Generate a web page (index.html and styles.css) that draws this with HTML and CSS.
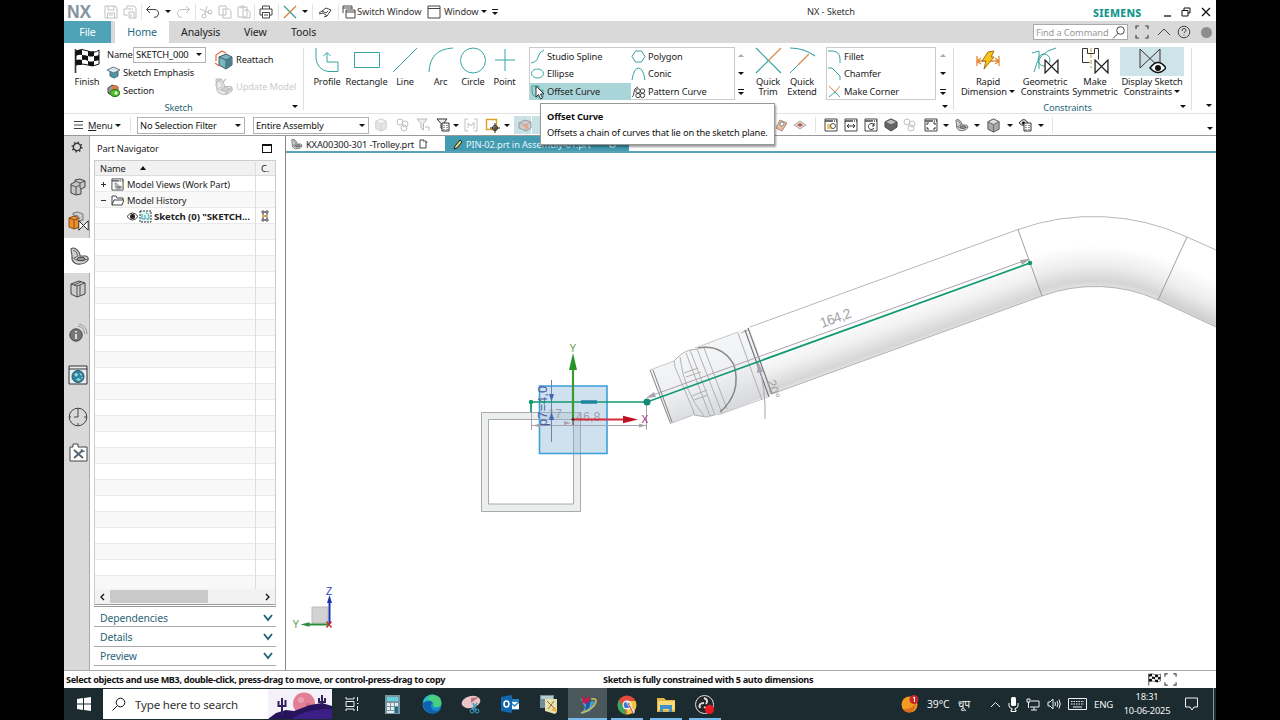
FILE: index.html
```html
<!DOCTYPE html>
<html lang="en">
<head>
    <meta charset="utf-8">
    <title>NX - Sketch</title>
    <link rel="stylesheet" href="styles.css">
</head>
<body>
<svg class="defs" width="0" height="0">
    <symbol id="flag" viewBox="0 0 26 26">
        <path d="M1.500 1v24" stroke="#333" stroke-width="1.600"/>
        <path d="M2 3q6-3 12 0t11-1v14q-5 3-11 1t-12 0z" fill="#fff" stroke="#111"/>
        <path d="M2 3q3-2 6-1v5q-3-1-6 1zM14 3q3 1 6 0v5q-3 1-6 0zM8 7q3 0 6 1v5q-3-2-6-1zM20 8q3 0 5-1v5q-2 1-5 1zM2 12q3-1 6 0v5q-3-1-6 0zM14 13q3 1 6 0v5q-3 1-6-1z" fill="#111"/>
    </symbol>
    <symbol id="bow" viewBox="0 0 14 14"><path d="M1 1v12L13 1v12z" fill="#fff" stroke="#222" stroke-width="1.200"/></symbol>
    <symbol id="shell" viewBox="0 0 20 20">
        <path d="M2 3q2-2 5 0 4 3 4 7l6 0q3 1 2 4-4 5-11 4-6-2-5-8z" fill="#d0d0d0" stroke="#555" stroke-width="1.100"/>
        <path d="M4 4q4 1 5 6L5 12M3 11q5 6 16 2" fill="none" stroke="#666"/>
        <ellipse cx="12" cy="13" rx="4" ry="1.800" fill="#999" stroke="#444"/>
    </symbol>
    <symbol id="cube" viewBox="0 0 16 16">
        <path d="M8 1l6 3v8l-6 3-6-3V4z" fill="#aaa" stroke="#555"/>
        <path d="M8 1l6 3-6 3-6-3z" fill="#ddd" stroke="#666"/><path d="M8 7v8" stroke="#666"/>
    </symbol>
    <symbol id="win" viewBox="0 0 14 14"><path d="M1 1h12v12H1z" fill="#fff" stroke="#444"/><path d="M1 3h12" stroke="#444" stroke-width="1.300" stroke-dasharray="8 1 1 1"/></symbol>
    <symbol id="corners" viewBox="0 0 14 14"><path d="M1 4V1h3M10 1h3v3M13 10v3h-3M4 13H1v-3" fill="none" stroke="#444" stroke-width="1.200"/></symbol>
    <symbol id="chev" viewBox="0 0 10 8"><path d="M1 1l4 5 4-5" fill="none" stroke="#1d6078" stroke-width="1.800"/></symbol>
    <symbol id="funnel" viewBox="0 0 14 14"><path d="M1 1h10L7.500 5.500V12L5 10V5.500z" fill="#eee" stroke="currentColor"/></symbol>
    <symbol id="parts" viewBox="0 0 14 14"><circle cx="4" cy="4" r="3"/><circle cx="9" cy="6" r="3"/><circle cx="8" cy="10" r="3"/></symbol>
</svg>

<div class="app">
    <div class="titlebar">
        <span class="logo">NX</span>
        <svg width="14" height="14" class="off"><path d="M1 1h10l2 2v10H1zM4 1v4h6V1M3.500 13V8h7v5M5 10h4"/></svg>
        <svg width="14" height="14" class="off"><path d="M1 4h3V1h7l2 2v10H6M1 4v6h4M6 13V7h5v6M5 4h5M8 9v3"/></svg>
        <i class="sep"></i>
        <svg width="16" height="14" class="ln dark"><path d="M5 1L1.500 4.500 5 8M2 4.500h8q4 1 3.500 4.500T9 12.500"/></svg>
        <i class="caret"></i>
        <svg width="16" height="14" class="off"><path d="M11 1l3.500 3.500L11 8M14 4.500H6Q2 5.500 2.500 9T7 12.500"/></svg>
        <i class="sep"></i>
        <svg width="14" height="14" class="off"><path d="M8 1L6 9M1 4l11 5"/><circle cx="5" cy="11" r="2"/><circle cx="11" cy="7" r="2"/></svg>
        <svg width="14" height="14" class="off"><path d="M1 1h7v9H1zM5 4h6l2 2v7H5z"/></svg>
        <svg width="14" height="14" class="off"><path d="M1 2h9v10H1zM4 1h3v2H4zM6 5h5l2 2v6H6z"/></svg>
        <i class="sep"></i>
        <svg width="14" height="14" class="ln dark"><path d="M3.500 4V1h7v3M3.500 10H1V4h12v6h-2.500M3.500 7.500h7V13h-7zM5 10h4"/></svg>
        <i class="sep"></i>
        <svg width="14" height="14"><path d="M1 1l12 12" stroke="#3a9d9b" stroke-width="1.300"/><path d="M13 1L1 13" stroke="#d08136" stroke-width="1.300"/></svg>
        <i class="caret"></i>
        <i class="sep"></i>
        <svg width="14" height="12" class="ln dark"><path d="M1 8l4-1 4 3 4-6-5-2-4 3 4 2 2-2M1 7l3-2M9 10l-3 1"/></svg>
        <i class="sep"></i>
        <svg width="14" height="14" class="ln dark"><path d="M1 8V1h9v3M1 3h9M4 5h9v8H4zM4 7h9"/></svg>
        <span class="left">Switch Window</span>
        <svg width="14" height="14" class="ln dark"><path d="M1 1h12v12H1zM1 3.500h12"/></svg>
        <span class="left window-label">Window</span>
        <i class="caret"></i>
        <i class="caret bar"></i>
        <span></span>
        <span class="left doc-title">NX - Sketch</span>
        <span class="left brand">SIEMENS</span>
        <svg width="9" height="12" class="ln black"><path d="M1 10h7"/></svg>
        <svg width="10" height="10" class="ln black thin"><path d="M3 3V1h6v5H7M1 3.500h6V9H1z"/></svg>
        <svg width="10" height="10" class="ln black"><path d="M1 1l8 8M9 1L1 9"/></svg>
    </div>

    <div class="tabs">
        <span class="tab file">File</span>
        <span class="tab home">Home</span>
        <span class="tab analysis">Analysis</span>
        <span class="tab view">View</span>
        <span class="tab tools">Tools</span>
        <div class="find"><span>Find a Command</span><svg width="14" height="13" class="ln dark"><circle cx="8.500" cy="4.500" r="3.800"/><path d="M6 7.500L1 12.500"/></svg></div>
        <div class="tab-icons">
            <svg width="14" height="14"><use href="#corners"/></svg>
            <svg width="14" height="10" class="ln dark"><path d="M1 8l6-6 6 6"/></svg>
            <svg width="14" height="14" class="ln dark"><circle cx="7" cy="7" r="5.800"/><path d="M5 6q0-2.500 2-2.500T9 5.500L7 8M7 9.500v1"/></svg>
            <i class="dot"></i>
        </div>
    </div>

    <div class="ribbon">
        <div class="group sketch">
            <div class="big finish"><svg width="26" height="26"><use href="#flag"/></svg><span>Finish</span></div>
            <div class="stack">
                <div class="row"><span class="name">Name</span><span class="combo small">SKETCH_000<i class="caret"></i></span></div>
                <div class="row"><svg width="13" height="13"><path d="M3 5l4 2 4-2v5l-4 2-4-2z" fill="#4d97a8" stroke="#467"/><path d="M0 4l6.500-3L13 4 6.500 7z" fill="#d9e8ee" stroke="#678"/></svg><span>Sketch Emphasis</span></div>
                <div class="row"><svg width="13" height="13"><path d="M1 4l4-3 6 2v6l-5 3-5-3z" fill="#999" stroke="#444"/><path d="M5 2l5-1 1 5-6 1z" fill="#e47a4a"/><ellipse cx="8" cy="9" rx="5" ry="3.500" fill="#4fc52b" stroke="#276b18"/><circle cx="9" cy="9" r="1.500" fill="#fff"/></svg><span>Section</span></div>
            </div>
            <div class="stack second">
                <div class="row"><svg width="19" height="20"><path d="M5 7l7-3 6 3v8l-6 4-7-4z" fill="#79b6bf" stroke="#456"/><path d="M5 7l7 3 6-3M12 10v9" fill="none" stroke="#456"/><path d="M12 10l6-3v8l-6 4z" fill="#4b7f8b"/><path d="M2 11V5l6-4 4 2M5 16l-4-3" fill="none" stroke="#e2714d" stroke-width="1.300"/></svg><span>Reattach</span></div>
                <div class="row disabled"><svg width="19" height="19" opacity=".4"><use href="#shell"/><path d="M2 9q0-6 6-7M9 5l3-3M11 17l7-7" fill="none" stroke="#666" stroke-width="1.500"/></svg><span>Update Model</span></div>
            </div>
            <div class="group-label">Sketch<i class="caret"></i></div>
        </div>

        <div class="group curve">
            <div class="big"><svg width="26" height="26" class="ln teal"><path d="M2 1v11Q4 23 14 24.500h10V15H13V6M9.500 9L13 5.500 16.500 9"/></svg><span>Profile</span></div>
            <div class="big"><svg width="28" height="26" class="ln teal"><path d="M1.500 5.500h25v15h-25z"/></svg><span>Rectangle</span></div>
            <div class="big"><svg width="26" height="26" class="ln teal"><path d="M1 25L25 1"/></svg><span>Line</span></div>
            <div class="big"><svg width="26" height="26" class="ln teal"><path d="M1 25Q2 2 25 1"/></svg><span>Arc</span></div>
            <div class="big"><svg width="28" height="28" class="ln teal"><circle cx="14" cy="13.500" r="12.500"/></svg><span>Circle</span></div>
            <div class="big"><svg width="22" height="26" class="ln teal"><path d="M11 2v22M1 13h20"/></svg><span>Point</span></div>
            <div class="gallery wide">
                <div><svg width="15" height="15" class="ln teal"><path d="M1 14q6-1 7-6t6-7"/></svg>Studio Spline</div>
                <div><svg width="15" height="15" class="ln teal"><path d="M4.500 2h6L14 7.500 10.500 13h-6L1 7.500z"/></svg>Polygon</div>
                <div><svg width="15" height="15" class="ln teal"><ellipse cx="7.500" cy="7.500" rx="6" ry="4.500"/></svg>Ellipse</div>
                <div><svg width="15" height="15" class="ln teal"><path d="M1 14Q3 2 7.500 2T14 14"/></svg>Conic</div>
                <div class="on"><svg width="15" height="15" class="ln teal"><path d="M2 2h7v4h4v7H6q-4-1-4-6z"/><path d="M5 5h2v4h4" stroke="#d08136"/></svg>Offset Curve</div>
                <div><svg width="15" height="15" class="ln dark"><path d="M1 13q2-1 2-5t4-5"/><circle cx="7" cy="7" r="2.200"/><circle cx="11.500" cy="7" r="2.200"/><circle cx="7" cy="11.500" r="2.200"/><circle cx="11.500" cy="11.500" r="2.200"/></svg>Pattern Curve</div>
            </div>
            <div class="scroll"><i class="caret up"></i><i class="caret"></i><i class="caret bar"></i></div>
            <div class="big two"><svg width="27" height="27"><path d="M1 1l25 25M1 26l13-13" stroke="#36a5a0" stroke-width="1.200"/><path d="M13 14L26 1" stroke="#d98a52" stroke-width="1.300"/></svg><span>Quick</span><span>Trim</span></div>
            <div class="big two"><svg width="27" height="27"><path d="M1 1q14 0 25 8" stroke="#36a5a0" stroke-width="1.200" fill="none"/><path d="M20 7L9 18" stroke="#d98a52" stroke-width="1.300"/><path d="M9 18l-8 8" stroke="#36a5a0"/></svg><span>Quick</span><span>Extend</span></div>
            <div class="gallery narrow">
                <div><svg width="15" height="15" class="ln teal"><path d="M1 2h5q7 1 7 8v4"/></svg>Fillet</div>
                <div><svg width="15" height="15" class="ln teal"><path d="M1 2h4l8 8v4"/></svg>Chamfer</div>
                <div><svg width="15" height="15"><path d="M2 2l11 11" stroke="#d98a52"/><path d="M8 8l5-6" stroke="#d98a52"/><path d="M2 13l6-5 5 5" fill="none" stroke="#36a5a0"/></svg>Make Corner</div>
            </div>
            <div class="scroll last"><i class="caret up"></i><i class="caret"></i><i class="caret bar"></i></div>
            <div class="group-label"><i class="caret"></i></div>
        </div>

        <div class="group constraints">
            <div class="big two"><svg width="26" height="27"><path d="M2 9v10M24 9v10M2 14h22M6 11l-4 3 4 3M20 11l4 3-4 3" fill="none" stroke="#e28a3b" stroke-width="1.300"/><path d="M13 5l6-1-3 6 3 0-10 12 2-8H7z" fill="#f8c51d" stroke="#a86f10"/></svg><span>Rapid</span><span>Dimension <i class="caret"></i></span></div>
            <div class="big two"><svg width="28" height="27"><path d="M3 25Q7 5 25 1M1 6l7-2v18" fill="none" stroke="#36a5a0"/><circle cx="13" cy="13" r="6" fill="none" stroke="#36a5a0"/><use href="#bow" x="13" y="12" width="15" height="15"/></svg><span>Geometric</span><span>Constraints</span></div>
            <div class="big two"><svg width="28" height="27"><path d="M1.500 1.500h5v5h7v-5h4v11M1.500 1.500v14h7" fill="none" stroke="#333"/><path d="M10 1v20" stroke="#d49231" stroke-dasharray="4 2"/><use href="#bow" x="13" y="12" width="15" height="15"/></svg><span>Make</span><span>Symmetric</span></div>
            <div class="big two active"><svg width="28" height="29"><path d="M2 2v19L22 2v19z" fill="#ccdce2" stroke="#333"/><path d="M12 21q8-11 16 0-8 9-16 0z" fill="#fff" stroke="#111" stroke-width="1.400"/><circle cx="20" cy="21" r="3" fill="#111"/></svg><span>Display Sketch</span><span>Constraints <i class="caret"></i></span></div>
            <div class="group-label">Constraints<i class="caret"></i></div>
        </div>
        <div class="ribbon-end"><i class="caret"></i></div>
    </div>

    <div class="selbar">
        <svg width="9" height="10" class="ln dark"><path d="M0 1.500h9M0 5h9M0 8.500h9"/></svg>
        <span class="left"><u>M</u>enu</span>
        <i class="caret"></i>
        <i class="sep"></i>
        <span class="combo">No Selection Filter<i class="caret"></i></span>
        <span></span>
        <span class="combo">Entire Assembly<i class="caret"></i></span>
        <svg width="14" height="14" opacity=".3"><use href="#cube"/></svg>
        <svg width="14" height="14" class="off"><use href="#parts"/></svg>
        <svg width="14" height="14" class="pale"><use href="#funnel"/><path d="M9 9h4v4" fill="none" stroke="#bbb"/></svg>
        <svg width="14" height="14" class="strong"><use href="#funnel"/><path d="M6 5h7v8H6z" fill="#fff" stroke="#333"/><path d="M8 7v5M11 7v5" stroke="#333" stroke-dasharray="1 1"/></svg>
        <i class="caret"></i>
        <svg width="14" height="14" class="off"><path d="M4 1H1v12h3M10 1h3v12h-3M4 10V5l3 3 3-4v7"/></svg>
        <svg width="15" height="15"><path d="M1.500 1.500h10v10h-10z" fill="#fff" stroke="#dc9e25" stroke-width="1.400"/><path d="M10 5v10M5 10h10" stroke="#222"/><circle cx="10" cy="10" r="2.500" fill="none" stroke="#222"/></svg>
        <i class="caret"></i>
        <span class="lit"><svg width="14" height="14"><path d="M1 5l6-3 6 2v6l-5 3-7-3z" fill="#ccc" stroke="#999"/><path d="M1 5l7 2 5-3M8 7v6" fill="none" stroke="#aaa"/><path d="M4 7h6v4z" fill="#f0a37c"/></svg></span>
        <span class="lit"></span>
        <span></span>
        <svg width="13" height="13"><path d="M1 9l4-8 7 3-5 8z" fill="#e7bba2" stroke="#aa8a7a"/><circle cx="7" cy="5" r="2" fill="#fff" stroke="#888"/></svg>
        <svg width="14" height="12"><path d="M1 6l6-4 6 4-6 4z" fill="#ddd" stroke="#aaa"/><path d="M4 6l3-2 3 2-3 2z" fill="#c35b46"/></svg>
        <i class="sep"></i>
        <svg width="14" height="14"><use href="#win"/><path d="M3 6h6v5H3z" fill="#ecc86a"/><circle cx="9" cy="8" r="2.500" fill="#fff" stroke="#555"/></svg>
        <svg width="14" height="14"><use href="#win"/><path d="M3 8h8M5 6L3 8l2 2M9 6l2 2-2 2" fill="none" stroke="#333"/></svg>
        <svg width="14" height="14"><use href="#win"/><path d="M10 7a3 3 0 1 0 0 3M10 5v3H8" fill="none" stroke="#333"/></svg>
        <svg width="14" height="14"><path d="M7 1l6 3v5l-6 4-6-4V4z" fill="#666" stroke="#444"/><path d="M7 1l6 3-6 3-6-3z" fill="#bbb" stroke="#555"/></svg>
        <svg width="14" height="14" class="off"><use href="#parts"/></svg>
        <svg width="14" height="14"><use href="#win"/><path d="M3 7V5h2M9 5h2v2M11 9v2H9M5 11H3V9" fill="none" stroke="#333"/></svg>
        <i class="caret"></i>
        <svg width="15" height="14"><use href="#shell"/></svg>
        <i class="caret"></i>
        <svg width="15" height="15"><use href="#cube"/></svg>
        <i class="caret"></i>
        <svg width="14" height="14"><path d="M1 5q5-7 9 0-4 5-9 0z" fill="#ddd" stroke="#333"/><circle cx="5.500" cy="5" r="1.500"/><path d="M6 5h7v8H6z" fill="#fff" stroke="#333"/><path d="M8 7v5M11 7v5" stroke="#333" stroke-dasharray="1 1"/></svg>
        <i class="caret"></i>
        <i class="sep"></i>
        <span></span>
        <i class="caret low"></i>
    </div>

    <div class="main">
        <div class="resource">
            <span class="r-gear"><svg width="12" height="12"><circle cx="6" cy="6" r="3.600" fill="none" stroke="#333" stroke-width="1.300"/><circle cx="6" cy="6" r="4.800" fill="none" stroke="#333" stroke-width="1.500" stroke-dasharray="1.500 2.270"/></svg></span>
            <span class="r-asm"><svg width="16" height="18"><path d="M1 6l4-2V2l5-1 5 2v6l-4 2v5l-5 1-5-2z" fill="#c6c6c6" stroke="#444"/><path d="M5 3l5 2 5-2M10 5v5l1 1M1 7l5 2 4-2M6 9v8" fill="none" stroke="#555"/></svg></span>
            <span class="r-con"><svg width="21" height="21"><path d="M1 7l5-2 6 2v9l-6 2-5-2z" fill="#ef8e2a" stroke="#864d1b"/><path d="M5 2l5-1 5 2v6l-5 1V5L5 4z" fill="#ccc" stroke="#777"/><path d="M1 7l5 2 6-2M6 9v9" fill="none" stroke="#864d1b"/><use href="#bow" x="10" y="9" width="11" height="11"/></svg></span>
            <span class="r-part"><svg width="20" height="20"><use href="#shell"/></svg></span>
            <span class="r-book"><svg width="16" height="18"><path d="M1 4l8-3 6 2v11l-8 3-6-3z" fill="#ccc" stroke="#444"/><path d="M1 4l6 2v11M7 6l8-3M4 5l7-3M10 5v11" fill="none" stroke="#555"/></svg></span>
            <span class="r-info"><svg width="19" height="19"><circle cx="7" cy="12" r="6.200" fill="#777" stroke="#444"/><path d="M7 8v1.500M7 11v5" stroke="#fff" stroke-width="1.500"/><path d="M9 3q6 1 7 8M10 1q8 2 8 10" fill="none" stroke="#999"/></svg></span>
            <span class="r-web"><svg width="20" height="20"><path d="M1 1h18v18H1z" fill="#e7eef2" stroke="#333"/><path d="M1 4h18" stroke="#333"/><circle cx="10" cy="11.500" r="6" fill="#2888a3" stroke="#34505c"/><path d="M6 9l3-1 1 2-2 2zM11 8l3 1-1 2zM8 14l3-1 2 2-3 1zM13 12l2 0-1 2z" fill="#a4d5db"/></svg></span>
            <span class="r-clock"><svg width="20" height="20" class="ln dark"><circle cx="10" cy="10" r="8.800"/><path d="M10 1v9H6M19 10h-3M1 10h2M10 19v-3"/></svg></span>
            <span class="r-tools"><svg width="19" height="19"><path d="M1 4h3V1h5v3h9v14H1z" fill="#fff" stroke="#444"/><path d="M5 7l9 8M14 7l-9 8" stroke="#567" stroke-width="2"/><path d="M12 6l1 3 3-1" fill="none" stroke="#567"/></svg></span>
        </div>

        <div class="navigator">
            <div class="nav-title">Part Navigator<i class="box"></i></div>
            <div class="tree">
                <div class="tree-head"><span>Name<i class="tri"></i></span><b>C.</b></div>
                <div class="tree-rows">
                    <div class="tree-row"><i class="exp plus"></i><svg width="13" height="13"><use href="#win" width="13" height="13"/><use href="#shell" x="3" y="4" width="8" height="8"/></svg>Model Views (Work Part)</div>
                    <div class="tree-row"><i class="exp"></i><svg width="13" height="13"><path d="M1 11V2h4l1 2h6v2M1 11l2-5h10l-2 5z" fill="#fff" stroke="#444"/></svg>Model History</div>
                    <div class="tree-row leaf">
                        <svg width="13" height="13"><path d="M1 6.500q5.500-7 11 0-5.500 7-11 0z" fill="#fff" stroke="#333"/><circle cx="6.500" cy="6.500" r="2.500" fill="#222"/></svg>
                        <svg width="13" height="13"><path d="M1 1h11v11H1z" fill="#e3f4f5" stroke="#333" stroke-dasharray="2 1"/><path d="M3 4v5h3V5M7 3q3 0 3 6H7" fill="none" stroke="#35a6ad"/></svg>
                        <b>Sketch (0) "SKETCH...</b>
                        <svg class="status-icon" width="8" height="12"><path d="M1 1h2v2H1zM5 1h2v2H5zM1 9h2v2H1zM5 9h2v2H5zM3 2h2M2 3v6M6 3v6M3 10h2" fill="none" stroke="#555"/><path d="M2 5h4v2H2z" fill="#eda23c"/></svg>
                    </div>
                </div>
                <div class="hscroll"><svg width="6" height="8" class="ln black"><path d="M5 1L2 4l3 3"/></svg><i></i><svg width="6" height="8" class="ln black"><path d="M1 1l3 3-3 3"/></svg></div>
            </div>
            <div class="fold">Dependencies<svg width="10" height="8"><use href="#chev"/></svg></div>
            <div class="fold">Details<svg width="10" height="8"><use href="#chev"/></svg></div>
            <div class="fold">Preview<svg width="10" height="8"><use href="#chev"/></svg></div>
        </div>

        <div class="work">
            <div class="doc-tabs">
                <div class="doc"><svg width="13" height="12"><use href="#shell"/></svg><span class="d1">KXA00300-301 -Trolley.prt</span><svg width="9" height="10" class="ln dark"><path d="M5 1H1v8h6V5M4 2h3l1 2H6"/></svg></div>
                <div class="doc current"><svg width="10" height="11"><path d="M1 10l1-3 5-6 2 2-5 6z" fill="#e3d779" stroke="#222"/></svg><span class="d2">PIN-02.prt in Assembly-01.prt</span><svg width="8" height="10" fill="none" stroke="#fff"><path d="M1 1h5v7H1z"/></svg></div>
            </div>
            <svg class="viewport" width="930" height="517" viewBox="286 153 930 517">
                <defs>
                    <linearGradient id="pipe" gradientUnits="userSpaceOnUse" x1="884" y1="278" x2="908" y2="345"><stop offset=".42" stop-color="#fff"/><stop offset=".7" stop-color="#f0f0f0"/><stop offset=".94" stop-color="#d6d6d6"/><stop offset="1" stop-color="#e2e2e2"/></linearGradient>
                    <linearGradient id="leg" gradientUnits="userSpaceOnUse" x1="1199" y1="243" x2="1169" y2="306"><stop offset=".38" stop-color="#fff"/><stop offset=".7" stop-color="#ededed"/><stop offset=".95" stop-color="#d0d0d0"/><stop offset="1" stop-color="#dcdcdc"/></linearGradient>
                    <radialGradient id="bend" gradientUnits="userSpaceOnUse" cx="1094" cy="440" r="224"><stop offset=".683" stop-color="#e2e2e2"/><stop offset=".71" stop-color="#d5d5d5"/><stop offset=".78" stop-color="#ededed"/><stop offset=".87" stop-color="#fff"/></radialGradient>
                    <linearGradient id="body" gradientUnits="userSpaceOnUse" x1="695" y1="348" x2="719" y2="415"><stop offset="0" stop-color="#f5f6f8"/><stop offset=".5" stop-color="#eeeff1"/><stop offset="1" stop-color="#d6d8dc"/></linearGradient>
                </defs>

                <!-- tube -->
                <path d="M750 327L1018 229.500 1042 296 772 394z" fill="url(#pipe)"/>
                <path d="M1018 229.500A224 224 0 0 1 1187 237L1158 300A153 153 0 0 0 1042 296z" fill="url(#bend)"/>
                <path d="M1187 237L1216 250V327L1158 300z" fill="url(#leg)"/>
                <g fill="none" stroke="#a5a5a5" stroke-width=".8">
                    <path d="M750 327L1018 229.500A224 224 0 0 1 1187 237L1216 250"/>
                    <path d="M772 394L1042 296A153 153 0 0 1 1158 300L1216 327"/>
                    <path d="M1018 229.500L1042 296M1187 237L1158 300" stroke="#888"/>
                </g>

                <!-- end fitting -->
                <path d="M650 370l25-9q8-9 20-13l55-21 22 67-51 20q-16 5-26 1l-24 8z" fill="url(#body)"/>
                <g fill="none" stroke="#aaa" stroke-width=".9">
                    <path d="M650 370l24-9M670.500 423.500l21-8M695 348l43-16M718 415l50-18" stroke="#c0c0c0"/>
                    <path d="M650 370l20.500 53.500M653 370l19 52" stroke="#777"/>
                    <path d="M674 361l1 6 18 43 1 5 12 2 8-2M674 361q8-9 16-11l8-1M680 357q4 35 24 59M686 353l24 63M690 350l25 65M697 349l25 64M704 348l23 61"/>
                    <path d="M684 373l14-5M694 400l14-5M686 377l15-5M692 396l15-6"/>
                    <path d="M698 348q24-4 36 17 8 28-14 47" stroke="#888" stroke-width="1.500"/>
                    <path d="M738 333l24 67M741 333l7-3"/>
                    <path d="M745 330l24 67M748 328l24 66" stroke="#777" stroke-width="1.200"/>
                </g>

                <!-- square tube section -->
                <path d="M481.500 412.500h99v99h-99zM488.500 419.500v84.500h85v-84.500z" fill="#ebeeee" fill-rule="evenodd" stroke="#aaa"/>

                <!-- selected plane -->
                <path d="M539.500 386h67.500v67.500h-67.500z" fill="#80b0d4" fill-opacity=".38" stroke="#3ba0dc" stroke-width="1.600"/>

                <!-- dimensions -->
                <g stroke="#a8a3ae" fill="#a8a3ae">
                    <path d="M649 396.500L1029 259M532 425.500h115M531.500 400v30M646.500 400v30" fill="none"/>
                    <path d="M1030 259l-10 1 2 5zM646 398l10-1-2-5zM646 425.500l-7-2v4zM533 425.500l7-2v4zM571 423l-7-2v4z" stroke="none"/>
                    <path d="M759 366q7 25 6 53" fill="none"/>
                    <path d="M758 362l-1 11 6-1z" stroke="none"/>
                </g>
                <g class="dim">
                    <text x="822" y="328" transform="rotate(-20 822 328)">164,2</text>
                    <text x="576" y="421" class="sm">46,8</text>
                    <text x="548" y="418" class="sm">17</text>
                    <text x="767" y="381" class="sm" transform="rotate(76 767 381)">20°</text>
                    <text x="547" y="426" class="p7" transform="rotate(-90 547 426)">p7=4,0</text>
                </g>
                <path d="M551.500 380v62" stroke="#777fa8"/>
                <path d="M551.500 402l-2.500-8h5zM551.500 412l-2.500 8h5z" fill="#4468b3"/>

                <!-- sketch curves -->
                <path d="M531 412v-10h116L1030 263" fill="none" stroke="#109a70" stroke-width="1.700"/>
                <path d="M581 402h16" stroke="#2282a0" stroke-width="3.500"/>
                <circle cx="531" cy="402" r="2.200" fill="#109a70"/><circle cx="647" cy="402" r="3.500" fill="#168878"/><circle cx="1030" cy="263" r="2.300" fill="#109a70"/>

                <!-- datum axes -->
                <path d="M573 421v-54" stroke="#3a9a2d" stroke-width="2.200"/><path d="M573 353l4 17h-8z" fill="#269424"/>
                <path d="M573 419.500h52" stroke="#d52c3c" stroke-width="2"/><path d="M638 419.500l-15-3.800v7.600z" fill="#bd1224"/>
                <path d="M571 419.500h4M573 417v8" stroke="#662222"/>
                <text x="569.500" y="351.500" class="axis y">Y</text><text x="641.500" y="423" class="axis x">X</text>

                <!-- view triad -->
                <path d="M312 607h16v16h-16z" fill="#d2d2d2" stroke="#bbb"/>
                <path d="M329.500 624v-23" stroke="#1b33b5" stroke-width="2"/><path d="M329.500 595l2.500 8h-5z" fill="#1b33b5"/>
                <path d="M329 624.500h-20" stroke="#2f8b3c" stroke-width="2"/><path d="M300.500 624.500l9-2.300v4.600z" fill="#2f8b3c"/>
                <path d="M326.500 621.500l5 6M331.500 621.500l-5 6" stroke="#c03030" stroke-width="1.500"/>
                <text x="326" y="594.500" class="axis z">Z</text><text x="292.500" y="628" class="axis y">Y</text>
            </svg>
        </div>
    </div>

    <div class="status">
        <b class="s1">Select objects and use MB3, double-click, press-drag to move, or control-press-drag to copy</b>
        <b class="s2">Sketch is fully constrained with 5 auto dimensions</b>
        <svg width="13" height="13"><use href="#flag"/></svg>
        <svg width="13" height="13"><use href="#corners"/></svg>
    </div>

    <div class="taskbar">
        <span><svg width="14" height="14" fill="#fff"><path d="M0 2l6-1v5.500H0zM7 .900L14 0v6.500H7zM0 7.500h6V13l-6-1zM7 7.500h7V14l-7-1z"/></svg></span>
        <div class="search">
            <svg width="14" height="14" class="ln black thin"><circle cx="8.500" cy="5.500" r="4.300"/><path d="M5.500 8.500l-5 5"/></svg>
            <span>Type here to search</span>
            <svg class="desert" width="64" height="30"><path d="M0 0h64v30H0z" fill="#f4f1f8"/><circle cx="36" cy="14.500" r="11" fill="#e27e96"/><circle cx="33" cy="11" r="3" fill="#eda0ae"/><circle cx="40" cy="16" r="2" fill="#cf6684"/><path d="M0 30l8-6 10-3 8 1 16-6 12-2 10 3v13z" fill="#27145c"/><path d="M24 30q14-11 40-10v10z" fill="#3b1e86"/><path d="M14 26V9M10.500 12v5h7v-6M54 16V6M51 9v4h6V9" fill="none" stroke="#32205e" stroke-width="2"/></svg>
        </div>
        <span><svg width="14" height="14" class="ln white"><path d="M1 2V0M1 14v-2M9 2V0M9 14v-2M1 2h8M1 12h8M1 4.500h8v5H1zM12.500 0v4M12.500 9v5M12 6.500h1.500"/></svg></span>
        <span class="gap"></span>
        <span><svg width="15" height="19"><path d="M0 0h15v19H0z" fill="#7995a0"/><path d="M2 2h11v4H2z" fill="#65d3df"/><path d="M2 8h3v3H2zM6 8h3v3H6zM2 12h3v3H2zM6 12h3v3H6zM2 16h7v2H2zM10 8h3v3h-3z" fill="#e4ecef"/><path d="M10 12h3v6h-3z" fill="#1f6b95"/></svg></span>
        <span><svg width="20" height="20"><circle cx="10" cy="10" r="9.500" fill="#168bd1"/><path d="M1 8Q4 0 11 .500q8 1 8.500 8 0 5-6 5-4-1-2-4-2-5-10-1.500z" fill="#47cf7f"/><path d="M1 9Q4 0 12 1q-7 1-6 5l-5 3z" fill="#2bb7e0"/><path d="M1 9q7-4 9 0-3 4 1 7 4 2 8-1-4 6-11 4-7-3-7-10z" fill="#1260ae"/></svg></span>
        <span><svg width="20" height="19"><ellipse cx="10" cy="7" rx="9.500" ry="6" fill="#e9c4c8" transform="rotate(-14 10 7)"/><path d="M10 3l8-1-8 6z" fill="#b9757e"/><path d="M12 8l3 8M16 8l-5 7" stroke="#3e9fc0" stroke-width="1.500"/><circle cx="11" cy="16" r="2" fill="none" stroke="#3e9fc0"/><circle cx="16" cy="16" r="2" fill="none" stroke="#3e9fc0"/></svg></span>
        <span><svg width="18" height="18"><path d="M8 4h10v11H8z" fill="#2482c5"/><path d="M9 7h9v7H9z" fill="#fff"/><path d="M9 7l4.500 4L18 7" fill="none" stroke="#2482c5" stroke-width="1.500"/><path d="M0 2l11-2v18L0 16z" fill="#1267ae"/><ellipse cx="5.500" cy="9" rx="2.500" ry="3" fill="none" stroke="#fff" stroke-width="1.600"/></svg></span>
        <span><svg width="18" height="19"><path d="M0 0h14v13H0z" fill="#718d99"/><path d="M1 1h12v3H1z" fill="#b8cbd1"/><path d="M5 4h12v13l-2 2-10-3z" fill="#e8e1b0"/><path d="M7 6l8 8M14 6l-6 8" stroke="#966c3c"/><path d="M11 15l4-3 2 5z" fill="#efac34"/></svg></span>
        <span class="running hot"><svg width="20" height="20"><path d="M2 3l7 4 8-1-5 10-8 3 3-7z" fill="#3fa7cf"/><path d="M4 1l4 3 3-3 1 5-3 4-5-3z" fill="#c61c4c"/><path d="M9 7l4-2-2 8-4 3z" fill="#2a50a5"/><path d="M13 4q6-1 5 3-2 7-15 11" fill="none" stroke="#c9b95a" stroke-width="1.700"/></svg></span>
        <span class="running"><svg width="20" height="20"><circle cx="10" cy="10" r="9.500" fill="#e34b3e"/><path d="M2 5l6 10 1 4.500A9.500 9.500 0 0 1 2 5z" fill="#37a65a"/><path d="M10 6h8.500a9.500 9.500 0 0 1-9 13.500z" fill="#f2c63a"/><circle cx="10" cy="10" r="4.500" fill="#fff"/><circle cx="10" cy="10" r="3.300" fill="#3e78d4"/><path d="M9 7l2-1 7 11-2 2z" fill="#e2e6f2"/><path d="M11 8l5 10" stroke="#c83732"/></svg></span>
        <span class="running"><svg width="18" height="16"><path d="M0 1h7l2 2h9v12H0z" fill="#e5b542"/><path d="M1 4h17v9H1z" fill="#f9da76"/><path d="M3 8h12v7h-3v-3H6v3H3z" fill="#438fc7"/></svg></span>
        <span class="running"><svg width="20" height="20"><circle cx="9.500" cy="9.500" r="9" fill="#242628" stroke="#ddd"/><path d="M9 3q5 2 2 6M5 13q-2-5 4-5M15 10q-1 5-6 2" fill="none" stroke="#ddd" stroke-width="2"/><circle cx="14.500" cy="14.500" r="4.500" fill="#ed171d"/></svg></span>
        <div class="tray">
            <svg width="18" height="18"><circle cx="8.500" cy="9.500" r="8" fill="#f29a22"/><path d="M2 14q8 1 13-6-1 9-7 9.500-4 0-6-3.500z" fill="#dd6c1b"/><circle cx="13" cy="4.500" r="4.500" fill="#c62728"/><path d="M12 3l1.500-1v5" fill="none" stroke="#fff"/></svg>
            <span class="temp">39°C</span><span class="hindi">धूप</span>
            <svg width="11" height="7" class="ln white"><path d="M1 6l4.500-4.500L10 6"/></svg>
            <svg width="11" height="15" fill="#fff"><rect x="3" y="0" width="5" height="9" rx="1.500"/><path d="M1 6v3q0 2 3 2.500V13H3v1.500h5V13H7v-1.500q3-.500 3-2.500V6" fill="none" stroke="#fff"/></svg>
            <svg width="14" height="13" class="ln white"><path d="M5 3h8v6H4M1 1h3v3H1zM2.500 4v6M8 9v3M5 12h6"/></svg>
            <svg width="14" height="12" class="ln white"><path d="M1 4h2l3-3v10L3 8H1zM8 4q1 2 0 4M10 3q2 3 0 6M12 1.500q2.500 4.500 0 9"/></svg>
            <svg width="19" height="12" class="ln white"><path d="M.500 .500h18v11H.500zM5 9h9"/><path d="M3 3.500h13M3 6h13" stroke-dasharray="1.500 1"/></svg>
            <span class="eng">ENG</span>
            <span class="clock"><span>18:31</span><span>10-06-2025</span></span>
            <svg width="13" height="14" class="ln white"><path d="M.500 1h12v9H9L7 13 5 10H.500z"/></svg>
            <i class="peek"></i>
        </div>
    </div>

    <div class="tooltip"><b>Offset Curve</b><span>Offsets a chain of curves that lie on the sketch plane.</span></div>
    <svg class="cursor" width="10" height="15"><path d="M1 1v11l2.500-2.500L5.500 14l2-1L5.500 9H9z" fill="#fff" stroke="#333"/></svg>
</div>
</body>
</html>
```

FILE: styles.css
```css
* {
    box-sizing: border-box;
}
body {
    margin: 0;
    background: #000;
    font-family: "Noto Sans", "Open Sans", sans-serif;
    font-size: 9.3px;
    letter-spacing: -0.13px;
    color: #222;
    overflow: hidden;
}
.defs {
    position: absolute;
}
svg {
    display: block;
    flex: none;
}
.app {
    position: relative;
    width: 1152px;
    height: 720px;
    margin: 0 auto;
    background: #fff;
    display: flex;
    flex-direction: column;
    white-space: nowrap;
}
.ln, .off {
    fill: none;
    stroke: #444;
}
.off {
    stroke: #c0c0c0;
}
.ln.black { stroke: #111; stroke-width: 1.3; }
.ln.thin { stroke-width: 1; }
.ln.white { stroke: #eef2f3; }
.ln.teal { stroke: #36a5a0; }
.pale { color: #bbb; }
.strong { color: #333; }

.caret {
    display: inline-block;
    width: 0;
    height: 0;
    border: 3px solid transparent;
    border-top: 3px solid #111;
    border-bottom: 0;
}
.caret.up {
    border-top: 0;
    border-bottom: 3px solid #aaa;
}
.caret.bar {
    width: 6px;
    height: 6px;
    border: 0;
    background: linear-gradient(#111, #111) top / 6px 1px no-repeat;
    position: relative;
}
.caret.bar::after {
    content: "";
    position: absolute;
    top: 3px;
    left: 0;
    border: 3px solid transparent;
    border-top-color: #111;
    border-bottom: 0;
}
.sep {
    width: 1px;
    height: 16px;
    background: #e4e4e4;
}

/* title bar */
.titlebar {
    height: 21px;
    flex: none;
    display: grid;
    grid-template-columns: 37px 20px 18px 4px 20px 10px 20px 4px 18px 20px 17px 4px 20px 4px 20px 10px 4px 22px 4px 17px 69px 16px 37px 10px 11px 307px 286px 64px 20px 18px 21px;
    align-items: center;
    justify-items: center;
    color: #333;
}
.left {
    justify-self: start;
}
.window-label {
    padding-left: 2px;
}
.logo {
    font: bold 17.5px "Liberation Sans", sans-serif;
    color: #84949e;
    justify-self: start;
    padding: 2px 0 0 3px;
}
.brand {
    font-weight: 800;
    font-size: 10.5px;
    letter-spacing: 0.3px;
    color: #13978d;
    padding-top: 2px;
}

/* ribbon tabs */
.tabs {
    height: 22px;
    flex: none;
    background: #d9d9d9;
    display: flex;
    align-items: center;
    font-size: 10.6px;
}
.tab {
    line-height: 22px;
}
.file {
    width: 47px;
    text-align: center;
    background: #50a3b7;
    color: #fff;
}
.home {
    width: 54px;
    margin-left: 4px;
    text-align: center;
    background: #fff;
    color: #1d6a83;
}
.analysis { width: 63px; padding-left: 12px; }
.view { width: 47px; padding-left: 12px; }
.tools { padding-left: 12px; flex: 1; }
.find {
    width: 95px;
    height: 16px;
    border: 1px solid #aaa;
    background: #fff;
    color: #999;
    font-size: 9.3px;
    display: flex;
    align-items: center;
    justify-content: space-between;
    padding: 0 1px 0 2px;
}
.tab-icons {
    width: 88px;
    display: grid;
    grid-template-columns: 28px 16px 24px 20px;
    align-items: center;
    justify-items: center;
}
.dot {
    width: 11px;
    height: 11px;
    border-radius: 50%;
    background: #8e8e8e;
}

/* ribbon */
.ribbon {
    height: 71px;
    flex: none;
    display: flex;
    border-bottom: 1px solid #e2e2e2;
}
.group {
    display: flex;
    position: relative;
    padding-top: 4px;
}
.group::after {
    content: "";
    position: absolute;
    right: 0;
    top: 5px;
    height: 62px;
    width: 1px;
    background: #ddd;
}
.sketch { width: 240px; }
.curve { width: 650px; padding-left: 4px; }
.constraints { width: 238px; padding-left: 2px; }
.big {
    display: flex;
    flex-direction: column;
    align-items: center;
    line-height: 10px;
    text-align: center;
}
.big svg {
    height: 28px;
    margin-bottom: 2px;
}
.big .caret {
    vertical-align: 2px;
}
.finish { width: 43px; padding-left: 3px; }
.curve .big:nth-child(1) { width: 38px; }
.curve .big:nth-child(2) { width: 41px; }
.curve .big:nth-child(3) { width: 36px; }
.curve .big:nth-child(4) { width: 35px; }
.curve .big:nth-child(5) { width: 30px; }
.curve .big:nth-child(6) { width: 33px; }
.curve .big.two { width: 34px; }
.constraints .big:nth-child(1) { width: 64px; }
.constraints .big:nth-child(2) { width: 50px; }
.constraints .big:nth-child(3) { width: 50px; }
.constraints .big:nth-child(4) { width: 64px; }
.active {
    background: linear-gradient(#cde5e9, #cde5e9) 0 -2px / 100% 31px no-repeat;
}
.stack {
    width: 107px;
    display: flex;
    flex-direction: column;
}
.stack .row {
    height: 17.6px;
    display: flex;
    align-items: center;
    gap: 3px;
}
.stack .row:first-child {
    height: 16px;
    margin-bottom: 1px;
    padding-bottom: 1px;
}
.stack .name {
    width: 23px;
}
.stack.second {
    width: 86px;
}
.stack.second .row,
.stack.second .row:first-child {
    height: 28px;
    margin: 0;
    padding: 0;
}
.stack.second .row:first-child {
    height: 25px;
}
.disabled {
    color: #ccc;
}
.combo {
    height: 17px;
    width: 100%;
    border: 1px solid #b2b2b2;
    display: flex;
    align-items: center;
    justify-content: space-between;
    padding: 0 3px 0 2px;
    color: #111;
}
.combo.small {
    width: 73px;
    height: 16px;
    flex: none;
}
.group-label {
    position: absolute;
    left: 0;
    right: 0;
    bottom: -1px;
    line-height: 13px;
    text-align: center;
    color: #2a6478;
    height: 13px;
}
.sketch .group-label { right: 11px; }
.constraints .group-label { right: 11px; }
.group-label .caret {
    position: absolute;
    right: 6px;
    bottom: 6px;
}
.sketch .group-label .caret,
.constraints .group-label .caret { right: -5px; }
.gallery {
    display: grid;
    grid-auto-rows: 17.3px;
    border: 1px solid #ccc;
    height: 53px;
}
.gallery.wide {
    width: 206px;
    margin-left: 8px;
    grid-template-columns: 101px 101px;
}
.gallery.narrow {
    width: 110px;
    margin-left: 7px;
}
.gallery div {
    display: flex;
    align-items: center;
    gap: 2px;
}
.gallery .on {
    background: #a9d5d9;
}
.scroll {
    width: 16px;
    height: 53px;
    padding: 7px 0 5px 3px;
    display: flex;
    flex-direction: column;
    justify-content: space-between;
}
.scroll.last {
    padding-left: 4px;
}
.ribbon-end {
    flex: 1;
    display: flex;
    align-items: flex-end;
    justify-content: flex-end;
    padding: 0 4px 6px;
}

/* selection bar */
.selbar {
    height: 22px;
    padding-top: 1px;
    flex: none;
    display: grid;
    grid-template-columns: 24px 25px 10px 14px 108px 8px 116px 24px 20px 20px 20px 6px 24px 18px 12px 18px 18px 222px 20px 18px 12px 20px 20px 20px 19px 20px 22px 8px 22px 10px 23px 9px 22px 10px 12px 146px 12px;
    align-items: center;
    justify-items: center;
    border-bottom: 1px solid #999;
}
.selbar svg:first-child { margin-left: 5px; }
.lit {
    width: 17px;
    height: 18px;
    background: #c9e2e6;
    display: flex;
    align-items: center;
    justify-content: center;
}
.low { margin-top: 6px; }

/* body */
.main {
    height: 534px;
    flex: none;
    display: flex;
}
.resource {
    width: 26px;
    background: #d9d9d9;
    border-right: 1px solid #aaa;
    display: flex;
    flex-direction: column;
}
.resource span {
    display: flex;
    align-items: center;
    justify-content: center;
    height: 34px;
    padding-left: 3px;
}
.resource .r-gear { height: 22px; margin-bottom: 12px; padding: 0; }
.resource .r-part { background: #fff; height: 35px; margin-right: -1px; }
.resource .r-book { height: 31px; }
.resource .r-info { margin-top: 11px; }
.resource .r-web { margin-top: 9px; }
.resource .r-clock { margin-top: 8px; }
.resource .r-tools { margin-top: 1px; }
.navigator {
    width: 196px;
    padding: 0 9px 0 4px;
    border-right: 1px solid #888;
    display: flex;
    flex-direction: column;
}
.nav-title {
    height: 24px;
    padding: 1px 4px 0 3px;
    display: flex;
    align-items: center;
    justify-content: space-between;
}
.box {
    width: 10px;
    height: 9px;
    border: 1px solid #111;
    border-top-width: 2px;
}
.tree {
    height: 447px;
    border: 1px solid #ccc;
    border-bottom: 3px double #999;
    display: flex;
    flex-direction: column;
}
.tree-head {
    height: 15px;
    flex: none;
    display: grid;
    grid-template-columns: 1fr 20px;
    align-items: center;
    background: #f1f1f1;
    border-bottom: 1px solid #ddd;
    padding-left: 5px;
}
.tree-head span {
    display: flex;
    align-items: center;
    gap: 14px;
}
.tree-head b {
    font-weight: normal;
    border-left: 1px solid #ddd;
    padding-left: 5px;
}
.tri {
    border: 3.5px solid transparent;
    border-bottom: 4px solid #111;
    border-top: 0;
}
.tree-rows {
    flex: 1;
    background: linear-gradient(#ddd, #ddd) 160px 0 / 1px 100% no-repeat,
        repeating-linear-gradient(#fff 0 15px, #e9e9e9 15px 16px, #f8f8f8 16px 31px, #e9e9e9 31px 32px);
}
.tree-row {
    height: 16px;
    display: flex;
    align-items: center;
    gap: 3px;
    padding-left: 5px;
}
.tree-row svg {
    margin-left: 2px;
}
.exp {
    width: 6px;
    height: 7px;
    background: linear-gradient(#333, #333) center / 5px 1px no-repeat;
}
.exp.plus {
    background: linear-gradient(#333, #333) center / 5px 1px no-repeat,
        linear-gradient(#333, #333) center / 1px 5px no-repeat;
}
.leaf {
    padding-left: 31px;
    gap: 0;
}
.leaf svg { margin-left: 0; }
.leaf b {
    width: 108px;
    padding-left: 2px;
    font-size: 9.6px;
    letter-spacing: -0.1px;
}
.leaf .status-icon { margin-left: 1px; }
.hscroll {
    height: 15px;
    display: flex;
    align-items: center;
    background: #f2f2f2;
    padding: 0 4px;
}
.hscroll i {
    width: 98px;
    height: 13px;
    background: #c9c9c9;
    margin: 0 57px 0 5px;
}
.fold {
    height: 19.3px;
    flex: none;
    display: flex;
    align-items: center;
    justify-content: space-between;
    border-bottom: 1px solid #aaa;
    padding: 1px 3px 0 6px;
    font-size: 10.4px;
    color: #2a6478;
}
.tree + .fold { margin-top: 1px; }
.work {
    flex: 1;
}
.doc-tabs {
    height: 17px;
    display: flex;
    border-bottom: 2px solid #5aa2b4;
}
.doc {
    width: 159px;
    display: flex;
    align-items: center;
    gap: 3px;
    padding: 1px 0 0 4px;
}
.doc.current {
    width: 184px;
    background: #439bb2;
    color: #e4f4f8;
    padding-left: 8px;
}
.d1 { width: 110px; }
.d2 { width: 140px; }
.dim text {
    font: 14px "Liberation Sans", sans-serif;
    letter-spacing: -0.7px;
    fill: #a3a0a8;
}
.dim .sm {
    font-size: 12.5px;
    letter-spacing: 0;
}
.dim .p7 {
    font-size: 13px;
    letter-spacing: 0;
    fill: #4a5f9f;
}
.axis { font: 10px "Liberation Sans", sans-serif; }
.axis.x { fill: #a02878; }
.axis.y { fill: #5a9a42; }
.axis.z { fill: #2744bd; }

.status {
    height: 18px;
    flex: none;
    border-top: 1px solid #aaa;
    display: grid;
    grid-template-columns: 537px 545px 16px 16px;
    align-items: center;
    padding-left: 2px;
    color: #111;
    font-size: 9.1px;
    letter-spacing: -0.34px;
}

/* taskbar */
.taskbar {
    height: 32px;
    flex: none;
    background: #1c2b30;
    display: flex;
    color: #f3f5f6;
}
.taskbar > span {
    width: 39px;
    display: flex;
    align-items: center;
    justify-content: center;
}
.taskbar > .gap { width: 2px; }
.search {
    width: 229px;
    margin: 1px 0;
    height: 30px;
    background: #fff;
    color: #333;
    display: flex;
    align-items: center;
    padding-left: 9px;
    font-size: 11.6px;
    letter-spacing: -0.2px;
}
.search span { flex: 1; padding-left: 9px; }
.taskbar > .running {
    padding-top: 2px;
    background: linear-gradient(#76b9ed, #76b9ed) center bottom / 32px 2px no-repeat;
}
.taskbar > .hot {
    background: linear-gradient(#76b9ed, #76b9ed) center bottom / 100% 2px no-repeat #4a575b;
}
.tray {
    flex: 1;
    display: flex;
    align-items: center;
    margin-left: 177px;
    font-size: 10.4px;
}
.tray svg + svg { margin-left: 7px; }
.temp { width: 26px; margin-left: 8px; }
.hindi { width: 20px; margin: 0 12px 0 5px; }
.eng {
    width: 22px;
    margin-left: 7px;
    font-size: 9.6px;
}
.clock {
    width: 50px;
    margin: 0 13px 0 6px;
    display: flex;
    flex-direction: column;
    align-items: center;
    line-height: 14px;
    font-size: 9.3px;
    letter-spacing: -0.2px;
}
.peek {
    width: 1px;
    height: 32px;
    background: #87979c;
    margin-left: auto;
    margin-right: 2px;
}

.tooltip {
    position: absolute;
    left: 476px;
    top: 103px;
    width: 235px;
    height: 42px;
    background: #fff;
    border: 1px solid #999;
    box-shadow: 1px 2px 2px rgba(0, 0, 0, 0.4);
    padding: 5px 6px;
    display: flex;
    flex-direction: column;
    line-height: 16px;
    color: #111;
    letter-spacing: -0.17px;
}
.cursor {
    position: absolute;
    left: 471px;
    top: 85px;
}
```
